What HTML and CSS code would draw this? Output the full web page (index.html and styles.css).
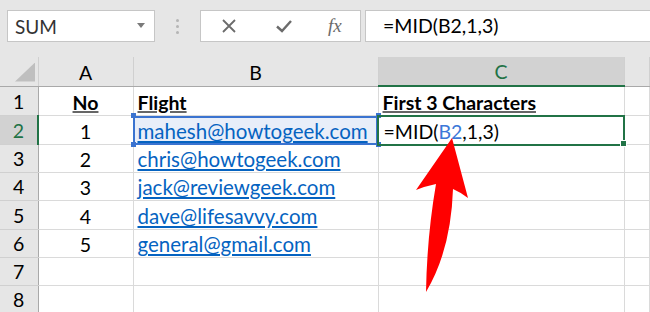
FILE: index.html
```html
<!DOCTYPE html>
<html lang="en">
<head>
    <meta charset="UTF-8">
    <meta name="viewport" content="width=device-width, initial-scale=1.0">
    <link rel="stylesheet" href="styles.css">
    <title>MID function</title>
</head>
<body>
    <div class="toolbar">
        <div class="namebox">
            <span>SUM</span>
            <svg class="caret" width="8" height="5" viewBox="0 0 8 5"><path d="M0 0 L8 0 L4 5 Z" fill="#7a7a7a"/></svg>
        </div>
        <div class="grip"><i></i><i></i><i></i></div>
        <div class="fx-buttons">
            <svg width="16" height="16" viewBox="0 0 16 16"><path d="M2 2 L14 14 M14 2 L2 14" stroke="#6b6b6b" stroke-width="1.8" fill="none"/></svg>
            <svg width="18" height="16" viewBox="0 0 18 16"><path d="M2 8.5 L7 13 L16 3" stroke="#6b6b6b" stroke-width="2.4" fill="none"/></svg>
            <span class="fx">fx</span>
        </div>
        <div class="formula">=MID(B2,1,3)</div>
    </div>

    <div class="sheet">
        <table>
            <colgroup>
                <col class="w-rowhead">
                <col class="w-a">
                <col class="w-b">
                <col class="w-c">
                <col>
            </colgroup>
            <thead>
                <tr>
                    <th class="corner"><span class="corner-tri"></span></th>
                    <th>A</th>
                    <th>B</th>
                    <th class="active-col">C</th>
                    <th></th>
                </tr>
            </thead>
            <tbody>
                <tr class="r29">
                    <th>1</th>
                    <td class="num"><b class="head">No</b></td>
                    <td><b class="head">Flight</b></td>
                    <td><b class="head">First 3 Characters</b></td>
                    <td></td>
                </tr>
                <tr class="r29">
                    <th class="active-row">2</th>
                    <td class="num">1</td>
                    <td class="ref"><a>mahesh@howtogeek.com</a><span class="h tl"></span><span class="h tr"></span><span class="h bl"></span><span class="h br"></span></td>
                    <td class="editing">=MID(<span class="refword">B2</span>,1,3)<span class="fill-handle"></span></td>
                    <td></td>
                </tr>
                <tr>
                    <th>3</th>
                    <td class="num">2</td>
                    <td><a>chris@howtogeek.com</a></td>
                    <td></td>
                    <td></td>
                </tr>
                <tr>
                    <th>4</th>
                    <td class="num">3</td>
                    <td><a>jack@reviewgeek.com</a></td>
                    <td></td>
                    <td></td>
                </tr>
                <tr class="r29">
                    <th>5</th>
                    <td class="num">4</td>
                    <td><a>dave@lifesavvy.com</a></td>
                    <td></td>
                    <td></td>
                </tr>
                <tr>
                    <th>6</th>
                    <td class="num">5</td>
                    <td><a>general@gmail.com</a></td>
                    <td></td>
                    <td></td>
                </tr>
                <tr>
                    <th>7</th>
                    <td></td>
                    <td></td>
                    <td></td>
                    <td></td>
                </tr>
                <tr>
                    <th>8</th>
                    <td></td>
                    <td></td>
                    <td></td>
                    <td></td>
                </tr>
            </tbody>
        </table>

        <!-- callout arrow pointing at the B2 reference -->
        <svg class="arrow" width="80" height="170" viewBox="0 0 80 170">
            <path d="M52 8 L68 68 Q60 62 53 59 Q51 120 26 162 Q27 106 36 54 Q26 56 16 60 Z" fill="#ff0000"/>
        </svg>
    </div>
</body>
</html>
```

FILE: styles.css
```css
body {
    margin: 0;
    width: 650px;
    height: 312px;
    overflow: hidden;
    background-color: #e6e6e6;
    font-family: Lato, "Open Sans", sans-serif;
    color: #000;
}

.toolbar {
    height: 57px;
    box-sizing: border-box;
    padding: 10px 0 0 7px;
    display: flex;
    align-items: flex-start;
}

.namebox {
    width: 148px;
    height: 32px;
    box-sizing: border-box;
    border: 1px solid #c6c6c6;
    background-color: #fff;
    display: flex;
    align-items: center;
    justify-content: space-between;
    padding: 0 9px 0 7px;
    font-size: 19px;
    color: #333;
}

.caret {
    margin-top: -2px;
}

.grip {
    width: 45px;
    height: 32px;
    display: flex;
    flex-direction: column;
    align-items: center;
    justify-content: center;
    gap: 3px;
}

.grip i {
    width: 3px;
    height: 3px;
    border-radius: 50%;
    background-color: #b5b5b5;
}

.fx-buttons {
    width: 161px;
    height: 32px;
    box-sizing: border-box;
    border: 1px solid #c6c6c6;
    background-color: #fff;
    display: flex;
    align-items: center;
    padding-left: 20px;
    gap: 38px;
}

.fx {
    font-family: "Liberation Serif", serif;
    font-style: italic;
    font-size: 19px;
    color: #6b6b6b;
    margin-left: -3px;
}

.formula {
    flex: 1;
    margin-left: 4px;
    height: 32px;
    box-sizing: border-box;
    border: 1px solid #c6c6c6;
    border-right: 0;
    background-color: #fff;
    padding-left: 17px;
    font-size: 19.5px;
    line-height: 30px;
}

.sheet {
    position: relative;
    background-color: #fff;
}

table {
    table-layout: fixed;
    border-collapse: collapse;
    width: 650px;
}

.w-rowhead { width: 38px; }
.w-a { width: 95px; }
.w-b { width: 245px; }
.w-c { width: 246px; }

th, td {
    padding: 0;
    height: 27px;
    font-size: 19.5px;
    white-space: nowrap;
    overflow: visible;
}

thead th {
    height: 28px;
    background-color: #e6e6e6;
    border-right: 1px solid #d0d0d0;
    border-bottom: 1px solid #a9a9a9;
    font-weight: normal;
    text-align: center;
    vertical-align: bottom;
    line-height: 26px;
}

.corner {
    position: relative;
}

.corner-tri {
    position: absolute;
    left: 15px;
    bottom: 4px;
    width: 20px;
    height: 19px;
    background-color: #bfbfbf;
    clip-path: polygon(100% 0, 100% 100%, 0 100%);
}

thead th.active-col {
    background-color: #d2d2d2;
    color: #217346;
    border-bottom: 2px solid #217346;
}

tr.r29 th, tr.r29 td {
    height: 28px;
}

tbody th {
    background-color: #e6e6e6;
    border-right: 1px solid #a9a9a9;
    border-bottom: 1px solid #d0d0d0;
    font-weight: normal;
    text-align: center;
    vertical-align: bottom;
    line-height: 26px;
}

tbody th.active-row {
    background-color: #d2d2d2;
    color: #217346;
    border-right: 2px solid #217346;
}

td {
    border-right: 1px solid #dadada;
    border-bottom: 1px solid #dadada;
    vertical-align: bottom;
    line-height: 25px;
    padding-left: 4px;
    position: relative;
}

td.num {
    text-align: center;
    padding-left: 0;
}

.head {
    font-size: 19.5px;
    text-decoration: underline;
    text-decoration-color: #666;
    text-decoration-thickness: 2px;
}

a {
    font-size: 20.5px;
    color: #0563c1;
    text-decoration: underline;
}

td.ref {
    background-color: #e8eef9;
    outline: 2px solid #3a73d0;
    outline-offset: -2px;
}

.h {
    position: absolute;
    width: 5px;
    height: 5px;
    background-color: #3a73d0;
}

.tl { left: -3px; top: -3px; }
.tr { right: -3px; top: -3px; }
.bl { left: -3px; bottom: -3px; }
.br { right: -3px; bottom: -3px; }

td.editing {
    outline: 2px solid #217346;
    outline-offset: -1px;
    padding-left: 5px;
}

.refword {
    color: #3c78d8;
}

.fill-handle {
    position: absolute;
    right: -3px;
    bottom: -3px;
    width: 5px;
    height: 5px;
    background-color: #217346;
    border: 1px solid #fff;
}

.arrow {
    position: absolute;
    left: 400px;
    top: 73px;
}
```
